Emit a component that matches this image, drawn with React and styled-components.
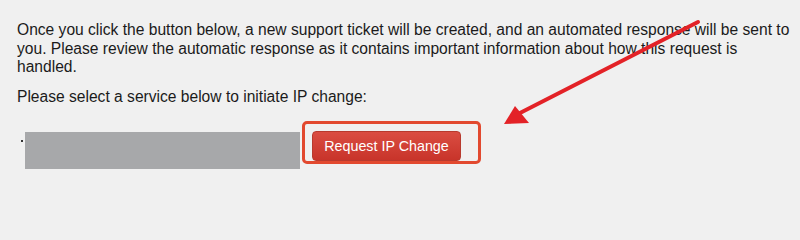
import React from 'react';
import styled, { createGlobalStyle } from 'styled-components';

const GlobalStyle = createGlobalStyle`
  html, body {
    margin: 0;
    padding: 0;
    background: #f0f0f0;
  }
  body {
    font-family: "Liberation Sans", Arial, sans-serif;
    color: #1b1b1b;
  }
`;

const Page = styled.div`
  position: relative;
  width: 800px;
  height: 206px;
  overflow: hidden;
  background: #f0f0f0;
`;

const Content = styled.div`
  width: 775px;
  padding: 21px 0 0 17px;
  font-size: 15.6px;
  line-height: 18.5px;
`;

const Para = styled.p`
  margin: 0 0 ${p => p.gap || 0}px;
`;

const ServiceRow = styled.div`
  display: flex;
  align-items: flex-start;
  margin-top: ${p => p.top}px;
  padding-left: 16px;
`;

const Dot = styled.span`
  width: 2px;
  height: 2px;
  margin: 19px 2px 0 5px;
  background: #333;
`;

const Redacted = styled.div`
  width: 275px;
  height: 37px;
  margin-top: 11px;
  background: #a7a8aa;
`;

const ButtonWrap = styled.div`
  position: relative;
  margin-left: 12px;
  margin-top: 10px;
`;

const RequestButton = styled.button`
  display: block;
  width: 149px;
  height: 30px;
  padding: 0;
  border: 1px solid #b83a2e;
  border-radius: 4px;
  background: linear-gradient(#da4d42, #c8342a);
  color: #fff;
  font-family: "Liberation Sans", Arial, sans-serif;
  font-size: 14.3px;
  cursor: pointer;
`;

const Highlight = styled.span`
  position: absolute;
  left: -10px;
  top: -10px;
  right: -20px;
  bottom: -3px;
  border: 3px solid #e2492f;
  border-radius: 5px;
  pointer-events: none;
`;

const ArrowLayer = styled.svg`
  position: absolute;
  left: 0;
  top: 0;
  pointer-events: none;
`;

export default function App() {
  return (
    <Page>
      <GlobalStyle />
      <Content>
        <Para gap={11}>
          Once you click the button below, a new support ticket will be created, and an automated response will be sent to
          you. Please review the automatic response as it contains important information about how this request is
          handled.
        </Para>
        <Para>Please select a service below to initiate IP change:</Para>
      </Content>
      <ServiceRow top={15}>
        <Dot />
        <Redacted />
        <ButtonWrap>
          <RequestButton>Request IP Change</RequestButton>
          <Highlight />
        </ButtonWrap>
      </ServiceRow>
      <ArrowLayer width="800" height="206" viewBox="0 0 800 206">
        <line x1="698" y1="22" x2="518" y2="114" stroke="#e32227" strokeWidth="4" strokeLinecap="round" />
        <polygon points="504,124 515,106 529,123" fill="#e32227" />
      </ArrowLayer>
    </Page>
  );
}
